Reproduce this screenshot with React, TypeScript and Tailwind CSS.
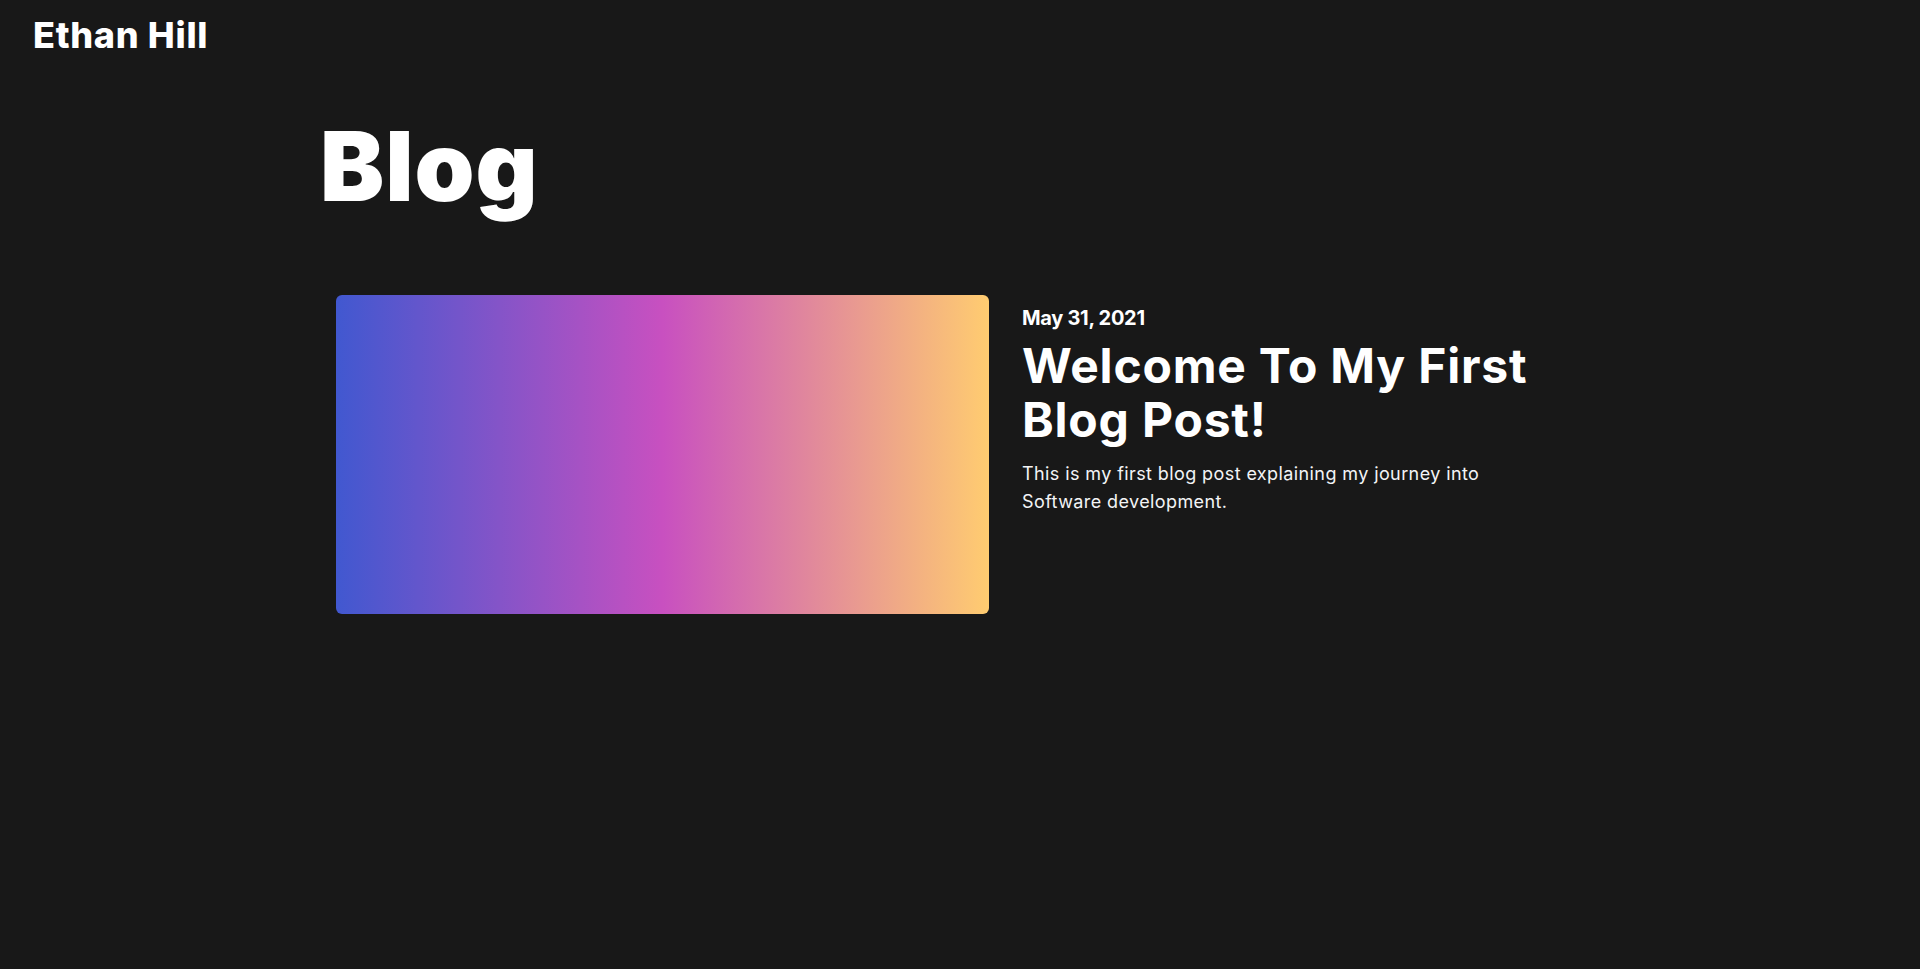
import React from "react";

export default function App() {
  return (
    <div
      className="min-h-screen w-full bg-[#181818] text-white"
      style={{ fontFamily: "Inter, 'Noto Sans', sans-serif" }}
    >
      <header className="px-[33px] pt-[13px]">
        <div className="text-[36px] font-extrabold leading-[44px] tracking-[0.7px]">Ethan Hill</div>
      </header>
      <main className="mx-auto w-[1280px]">
        <h1 className="mt-[51px] text-[96px] font-black leading-[116px] tracking-[1px]">Blog</h1>
        <article className="mt-[71px] flex gap-[33px] px-4">
          <div className="h-[319px] w-[653px] shrink-0 rounded-md bg-[linear-gradient(90deg,#4158D0_0%,#C850C0_50%,#FFCC70_100%)]" />
          <div className="w-[520px] pt-[11px]">
            <div className="text-[20px] font-bold leading-[24px] tracking-[-0.3px]">May 31, 2021</div>
            <h2 className="mt-[9px] text-[48px] font-bold leading-[54px] tracking-[0.8px]">
              Welcome To My First Blog Post!
            </h2>
            <p className="mt-[13px] text-[18px] leading-[28px] tracking-[0.4px] text-gray-100">
              This is my first blog post explaining my journey into Software development.
            </p>
          </div>
        </article>
      </main>
    </div>
  );
}
